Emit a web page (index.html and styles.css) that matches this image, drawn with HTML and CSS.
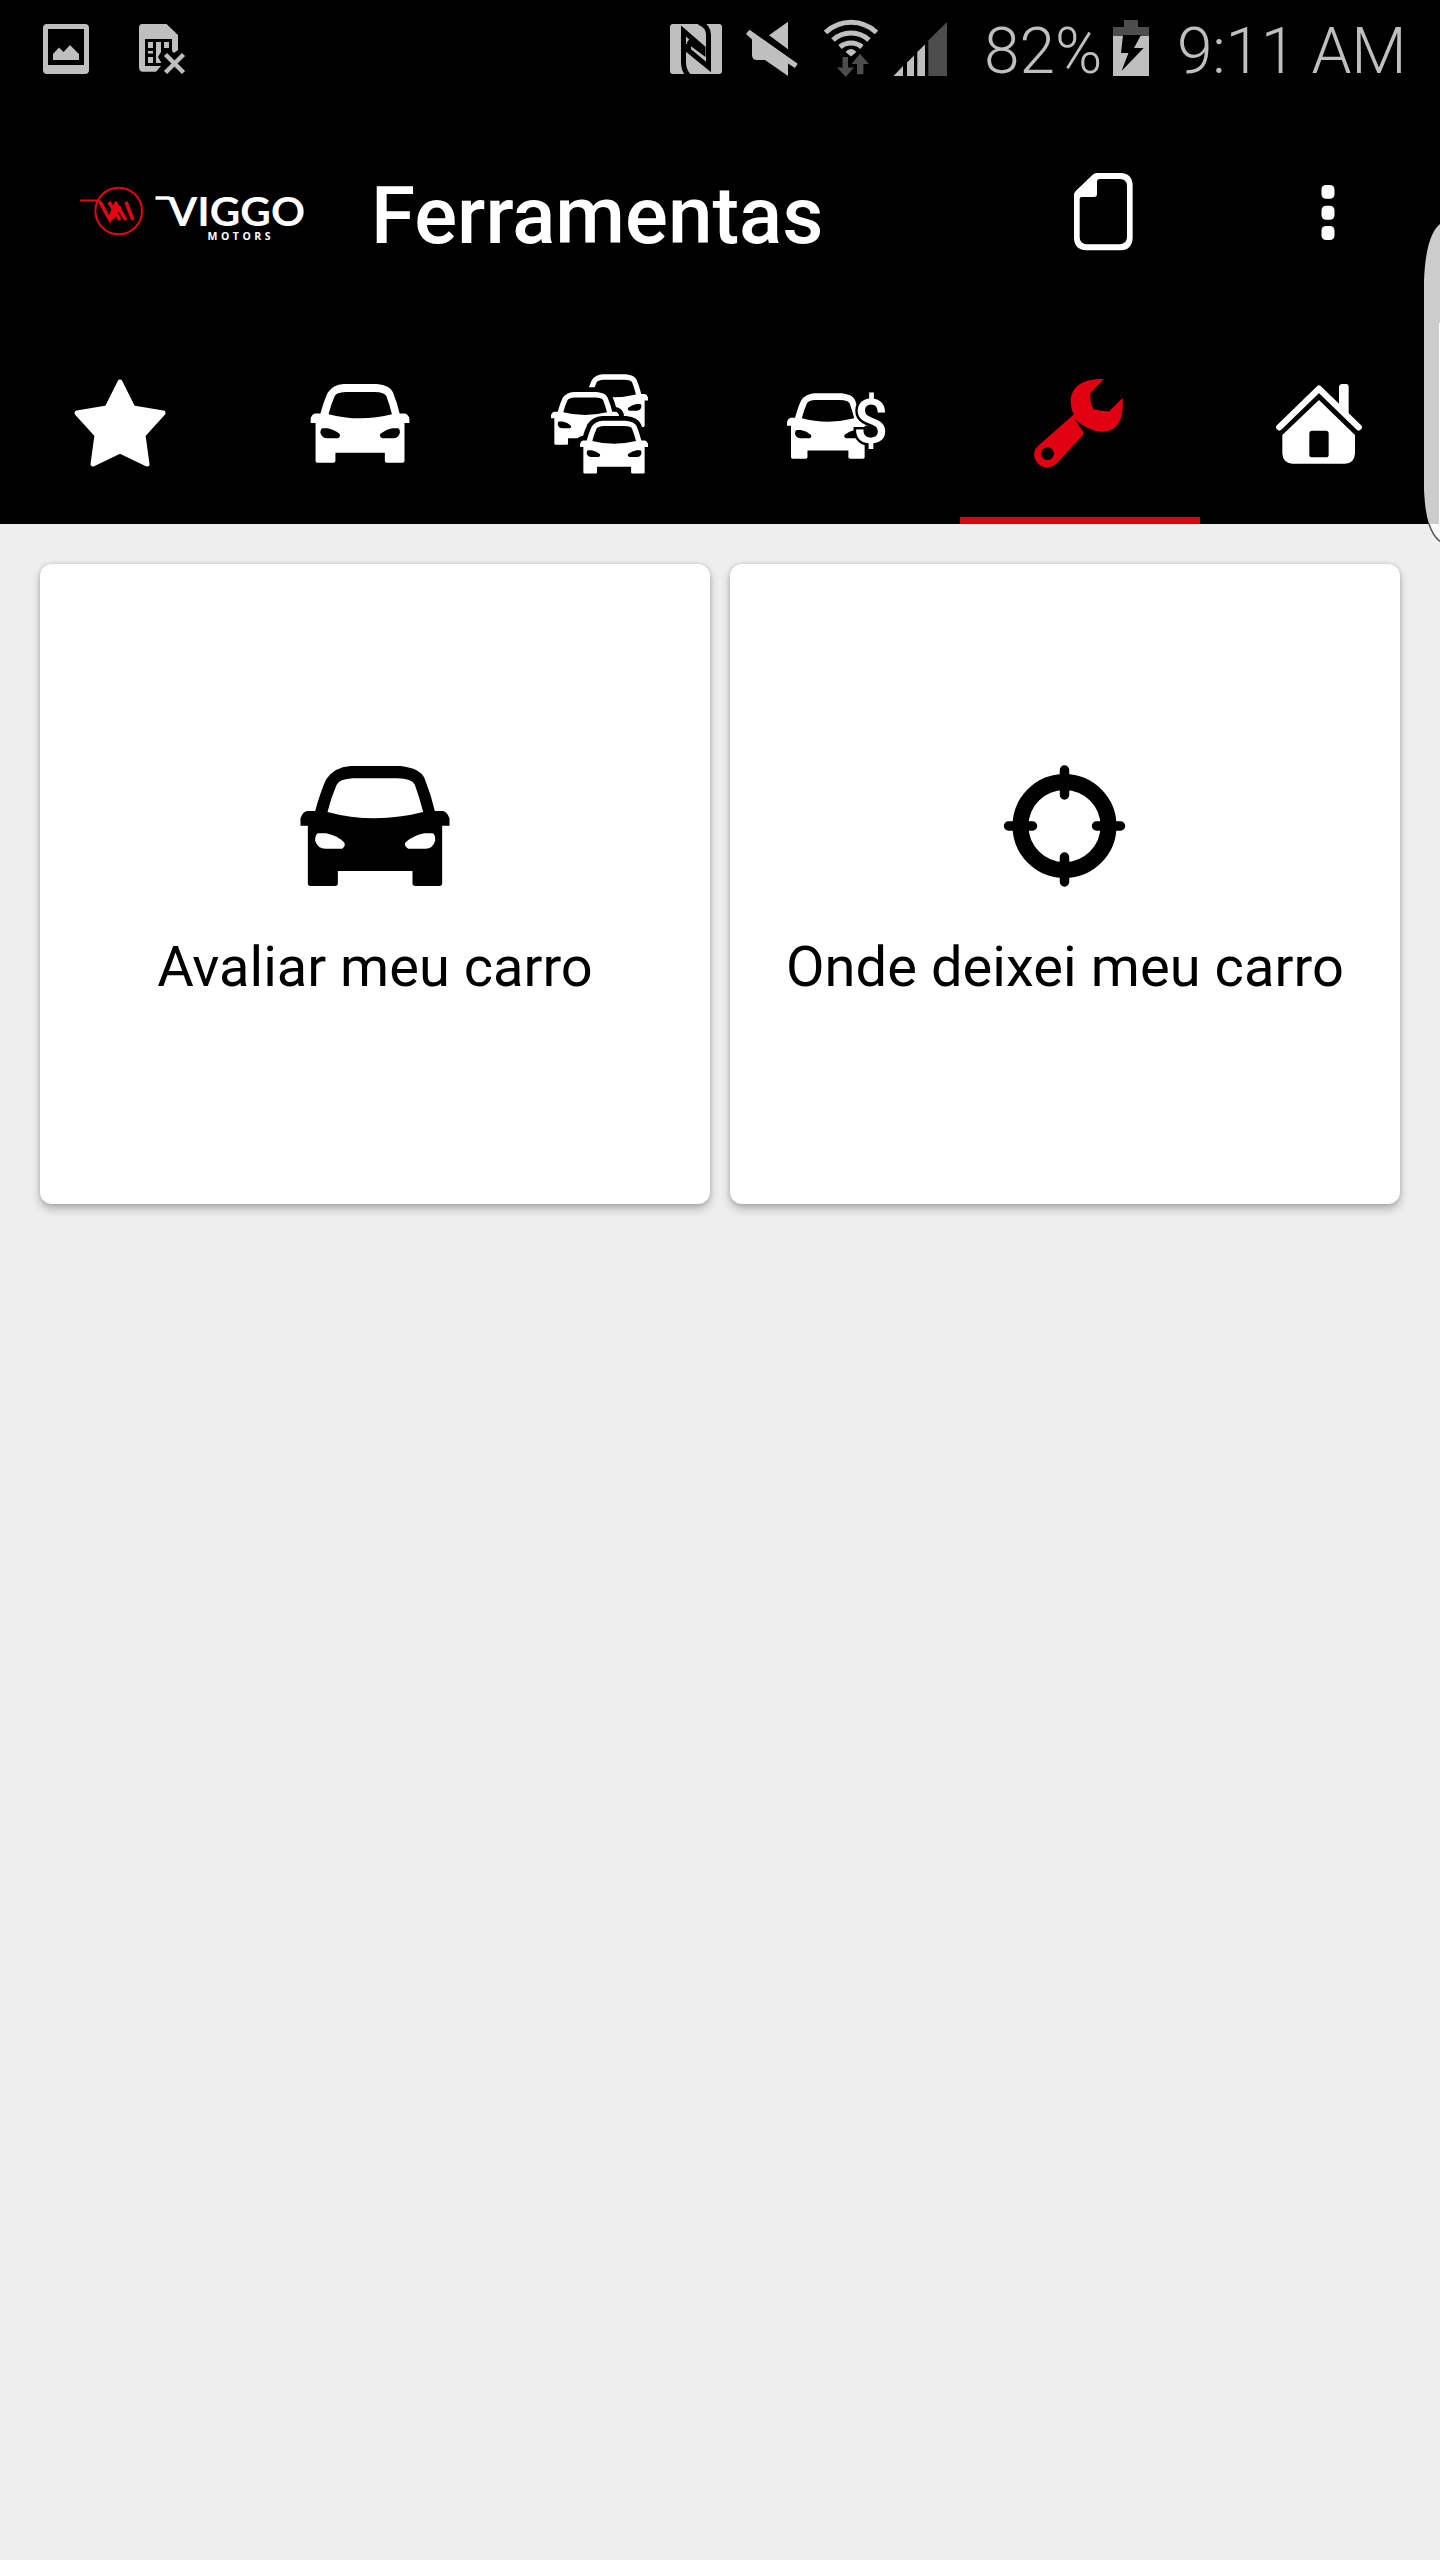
FILE: index.html
```html
<!DOCTYPE html>
<html lang="pt-BR">
<head>
<meta charset="utf-8">
<title>Ferramentas</title>
<link rel="stylesheet" href="styles.css">
</head>
<body>
<svg class="defs" aria-hidden="true">
  <defs>
    <path id="car-body" d="M690 78H840Q900 85 912 115Q932 165 943 213H967Q980 215 987 235V257H965V430Q965 438 957 438H885Q876 438 876 430V393H652V430Q652 438 643 438H570Q562 438 562 430V257H540V235Q546 216 560 213H584Q600 155 617 118Q640 82 690 78Z"/>
    <path id="car" fill-rule="evenodd" d="M690 78H840Q900 85 912 115Q932 165 943 213H967Q980 215 987 235V257H965V430Q965 438 957 438H885Q876 438 876 430V393H652V430Q652 438 643 438H570Q562 438 562 430V257H540V235Q546 216 560 213H584Q600 155 617 118Q640 82 690 78ZM698 115Q655 117 648 135Q632 172 621 216Q690 235 764 235Q838 234 908 216Q897 172 883 134Q875 116 830 115ZM592 280Q584 284 584 302Q592 326 615 326H665Q678 317 670 306Q650 287 617 280ZM937 280Q945 284 944 302Q937 326 915 326H863Q848 317 856 306Q880 286 911 280Z"/>
  </defs>
</svg>

<div class="status-bar">
  <svg class="status-icon" width="46" viewBox="43 16 46 64"><path fill-rule="evenodd" d="M47 24H85Q89 24 89 28V70Q89 74 85 74H47Q43 74 43 70V28Q43 24 47 24ZM48 29V65H84V29ZM53 60V54L59 47.500L63.500 52L70 45L79 54V60Z"/></svg>
  <svg class="status-icon sim" width="47" viewBox="139 16 47 64"><path fill-rule="evenodd" d="M142 24H166.500L178 35V50L174 53L172 51V39H145V66H161L156 71.700H143Q139 71.700 139 67V28Q139 24 142 24Z"/><path d="M148 42h5v6h-5zM148 51h5v2.500h-5zM148 57h5v6h-5zM156 42h5v10l-3 5l3 5v1h-5zM164 42h5v6h-5z"/><path class="line" stroke-width="4.500" d="M165.500 54.500L183.500 72.500M183.500 54.500L165.500 72.500"/></svg>
  <div class="status-right">
    <svg class="status-icon nfc" width="52" viewBox="670 16 52 64"><rect x="670" y="24" width="52" height="50" rx="3"/><path class="cut" d="M689 76Q683.500 71 683.500 62V31L703 48V52L688 41M699 22.500Q708.500 26 708.500 35V67L688.500 50.500V44"/></svg>
    <svg class="status-icon mute" width="53" viewBox="746 16 53 64"><path d="M788 21.700V49.300L769 35.300ZM749.500 29.700L797.700 63.700L795 68L788 63.500V76L765 60H757Q752 60 752 55V39.500L746 34Z"/></svg>
    <svg class="status-icon wifi" width="55" viewBox="824 16 55 64"><path class="line" stroke-width="5" d="M825.500 32.500A37 37 0 0 1 876.500 32.500M833 40A26.500 26.500 0 0 1 869 40M840 47A17 17 0 0 1 862 47"/><path d="M845.500 52Q851 46 856.500 52L851 56.500Z"/><path class="dim" d="M842.500 57h5.500v10.500h6L845.700 77L837 67.500h5.500zM860 53.700L869 64h-5.600v10.300H857V64h-5.500z"/></svg>
    <svg class="status-icon signal" width="54" viewBox="893 16 54 64"><path d="M893.500 76L903 66V76ZM907 76V62.500L914 55.500V76ZM917.300 76V52L925 44.500V76Z"/><path class="dim" d="M928.300 76V40.500L947 22V76Z"/></svg>
    <span class="battery-level">82%</span>
    <svg class="status-icon battery" width="36" viewBox="1113 16 36 64"><path class="dim" d="M1124 20h14v7h11v9h-36v-9h11z"/><path d="M1113 36h36v40h-36z"/><path class="hole" d="M1123 35H1141L1134 48H1143.700L1121.500 71L1128.500 53H1121Z"/></svg>
    <span class="clock">9:11 AM</span>
  </div>
</div>

<header class="app-bar">
  <svg class="logo" width="232" height="68" viewBox="78 180 232 68">
    <g class="logo-mark">
      <circle cx="117.700" cy="211" r="23.300"/>
      <path d="M79 200.500H96Q99 200.500 101 204L108 218L114 204"/>
      <path class="logo-strokes" d="M99 202L109 220L116 206M108 202L119 220M114 202L125 220M125 202L132 220M111 219L119 206"/>
    </g>
    <path class="logo-swash" d="M154.500 198H167Q170 198 172 202L179 218"/>
    <text class="logo-name" x="167" y="225.500" textLength="137" lengthAdjust="spacingAndGlyphs">VIGGO</text>
    <text class="logo-sub" x="206.500" y="240" textLength="63">MOTORS</text>
  </svg>
  <h1 class="title">Ferramentas</h1>
  <svg class="doc-icon" width="68" height="84" viewBox="1070 172 68 84"><path transform="translate(1030 150) scale(.33333)" fill-rule="evenodd" d="M200 69H272Q308 71 308 107V264Q306 300 272 301H168Q133 299 132 264V132Q133 127 138 122L188 74Q193 69 200 69ZM208 87Q201 88 201 95V132Q201 141 192 141H155Q149 141 149 146V262Q150 281 168 283H270Q290 281 291 262V107Q290 88 270 87Z"/></svg>
  <svg class="more-icon" width="14" height="68" viewBox="1321.500 180 14 68"><rect x="1322" y="185" width="13" height="13.700" rx="4.500"/><rect x="1322" y="205.700" width="13" height="14" rx="4.500"/><rect x="1322" y="226" width="13" height="14" rx="4.500"/></svg>
</header>

<nav class="tabs">
  <a class="tab"><svg width="240" height="192" viewBox="0 332 240 192"><path class="star" d="M120 382L133 408L163 413L143 435L147 464L120 451L93 464L97 435L77 413L107 408Z"/></svg></a>
  <a class="tab"><svg width="240" height="192" viewBox="240 332 240 192"><use href="#car" transform="translate(310.700 384) scale(.2207 .2185) translate(-540 -78)"/></svg></a>
  <a class="tab"><svg width="240" height="192" viewBox="480 332 240 192">
    <use href="#car" transform="translate(580 374.300) scale(.1521 .1465) translate(-540 -78)"/>
    <use class="gap" href="#car-body" transform="translate(551 392) scale(.1521 .1465) translate(-540 -78)"/>
    <use href="#car" transform="translate(551 392) scale(.1521 .1465) translate(-540 -78)"/>
    <use class="gap" href="#car-body" transform="translate(580 420.700) scale(.1521 .1465) translate(-540 -78)"/>
    <use href="#car" transform="translate(580 420.700) scale(.1521 .1465) translate(-540 -78)"/>
  </svg></a>
  <a class="tab"><svg width="240" height="192" viewBox="720 332 240 192"><use href="#car" transform="translate(787 393.300) scale(.1827 .1815) translate(-540 -78)"/><text class="dollar" x="853" y="442.500">$</text></svg></a>
  <a class="tab active"><svg width="240" height="192" viewBox="960 332 240 192"><path transform="translate(940 350) scale(.33333)" fill-rule="evenodd" d="M492 87C430 84 392 110 392 155Q393 178 402 193L294 288Q278 303 284 325Q295 352 320 353Q339 352 352 338L428 256Q433 249 426 239Q415 226 405 208Q446 244 485 245C532 244 552 213 548 143L508 184Q485 185 460 178Q449 155 451 130ZM323 292A19 19 0 1 1 322 292Z"/></svg></a>
  <a class="tab"><svg width="240" height="192" viewBox="1200 332 240 192"><g transform="translate(1030 150) scale(.33333)"><path class="roof" d="M748 832L867 716L986 832"/><path fill-rule="evenodd" d="M867 750L975 855V911Q973 939 945 941H787Q759 938 757 911V855ZM845 842Q838 843 838 850V914Q838 922 846 922H888Q896 922 896 914V850Q896 842 888 842ZM927 762V709Q930 702 936 702H950Q956 703 956 710V792Z"/></g></svg></a>
</nav>

<main class="cards">
  <section class="card">
    <svg width="149" height="120" viewBox="541.500 78 447 360"><use href="#car"/></svg>
    <p class="card-label">Avaliar meu carro</p>
  </section>
  <section class="card">
    <svg width="122" height="120" viewBox="-60.500 -60 122 120"><circle class="ring" r="44"/><path class="ticks" d="M0-56V-31M0 56V31M-56 0H-32M56 0H32"/></svg>
    <p class="card-label wide">Onde deixei meu carro</p>
  </section>
</main>

<svg class="edge-handle" width="18" height="324" viewBox="1422 221 18 324">
  <path fill="#ccc" d="M1440 224Q1426 235 1424 280V490Q1425 512 1429 524H1440Z"/>
  <path fill="#fafafa" d="M1429 524Q1433 536 1440 541V524Z"/>
  <path class="edge-line" d="M1429 524Q1433 536 1440 541.500"/>
  <path fill="#fff" d="M1439 323h1v201h-1z"/>
</svg>
</body>
</html>
```
FILE: styles.css
```css
* { box-sizing: border-box; }
body {
  position: relative;
  margin: 0;
  width: 1440px;
  height: 2560px;
  overflow: hidden;
  background: #eee;
  font-family: Roboto, "Liberation Sans", sans-serif;
}
svg { display: block; flex: none; overflow: visible; }
.defs { position: absolute; width: 0; height: 0; overflow: hidden; }

.status-bar {
  display: flex;
  align-items: center;
  height: 96px;
  padding-left: 43px;
  background: #000;
  color: #bfbfbf;
}
.status-icon { height: 64px; fill: #bfbfbf; overflow: hidden; }
.status-icon .dim { fill: #4d4d4d; }
.status-icon .hole { fill: #000; }
.status-icon .line { fill: none; stroke: #bfbfbf; }
.sim { margin-left: 50px; }
.status-right { display: flex; align-items: center; margin-left: 484px; }
.nfc .cut { fill: none; stroke: #000; stroke-width: 5; }
.mute { margin-left: 24px; }
.wifi { margin-left: 25px; }
.signal { margin-left: 14px; }
.battery-level, .clock {
  font-size: 64px;
  font-weight: 300;
  line-height: 64px;
  white-space: nowrap;
  padding-top: 8px;
}
.battery-level { width: 129px; margin-left: 37px; }
.clock { margin-left: 28px; letter-spacing: -.2px; }

.app-bar {
  display: flex;
  align-items: center;
  height: 236px;
  padding-left: 79px;
  background: #000;
  fill: #fff;
  color: #fff;
}
.logo-mark { fill: none; stroke: #e30613; stroke-width: 2; }
.logo-strokes { stroke-width: 3.500; }
.logo-swash { fill: none; stroke: #fff; stroke-width: 3.500; }
.logo-name { font: 700 40px Lato, sans-serif; }
.logo-sub { font: 700 10.500px "Open Sans", sans-serif; }
.title {
  width: 699px;
  margin: 0 0 0 60px;
  padding-top: 3px;
  font-size: 80px;
  font-weight: 500;
  line-height: 94px;
}
.more-icon { margin-left: 183px; }

.tabs { display: flex; height: 192px; background: #000; fill: #fff; }
.tab { width: 240px; height: 192px; }
.tab.active { fill: #e00012; box-shadow: inset 0 -7px #dc0012; }
.star { stroke: #fff; stroke-width: 5; stroke-linejoin: round; }
.gap { fill: #000; stroke: #000; stroke-width: 64; stroke-linejoin: round; }
.dollar {
  font-size: 62px;
  font-weight: 500;
  stroke: #000;
  stroke-width: 5;
  paint-order: stroke;
}
.roof { fill: none; stroke: #fff; stroke-width: 19; stroke-linecap: round; stroke-linejoin: round; }

.cards { display: flex; gap: 20px; padding: 40px; }
.card {
  display: flex;
  flex-direction: column;
  align-items: center;
  width: 670px;
  height: 640px;
  padding-top: 202px;
  border-radius: 12px;
  background: #fff;
  box-shadow: 0 5px 8px rgba(0, 0, 0, .25), 0 0 4px rgba(0, 0, 0, .15);
}
.card-label {
  margin: 48px 0 0;
  font-size: 56px;
  line-height: 66px;
  color: #000;
  white-space: nowrap;
}
.card-label.wide { letter-spacing: .07px; }
.ring { fill: none; stroke: #000; stroke-width: 16; }
.ticks { stroke: #000; stroke-width: 9.500; stroke-linecap: round; }

.edge-handle { position: absolute; top: 221px; right: 0; overflow: hidden; }
.edge-line { fill: none; stroke: #555; stroke-width: 1.500; }
```
